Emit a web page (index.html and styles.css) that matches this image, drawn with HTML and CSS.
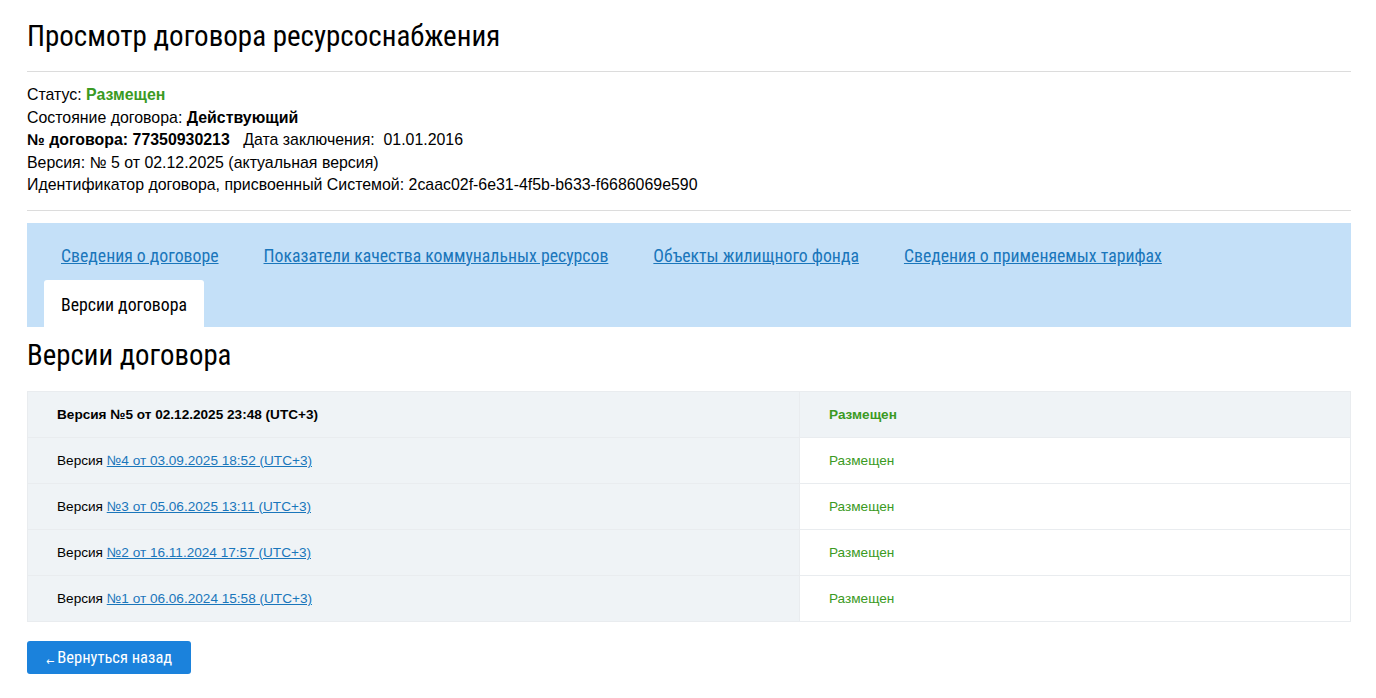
FILE: index.html
```html
<!DOCTYPE html>
<html lang="ru">
  <head>
    <meta charset="UTF-8" />
    <meta name="viewport" content="width=device-width, initial-scale=1.0" />
    <title>Просмотр договора ресурсоснабжения</title>
    <link rel="stylesheet" href="styles.css">
  </head>
  <body>
    <div class="page">
      <h1 class="page-title">Просмотр договора ресурсоснабжения</h1>

      <div class="info">
        <div>Статус: <span class="status-ok">Размещен</span></div>
        <div>Состояние договора: <b>Действующий</b></div>
        <div>
          <b>№ договора: 77350930213</b>
          <span class="gap">Дата заключения:&nbsp; 01.01.2016</span>
        </div>
        <div>Версия: № 5 от 02.12.2025 (актуальная версия)</div>
        <div>Идентификатор договора, присвоенный Системой: 2caac02f-6e31-4f5b-b633-f6686069e590</div>
      </div>

      <div class="tabs">
        <div class="tabs-row links">
          <a href="#" class="tab-link">Сведения о договоре</a>
          <a href="#" class="tab-link">Показатели качества коммунальных ресурсов</a>
          <a href="#" class="tab-link">Объекты жилищного фонда</a>
          <a href="#" class="tab-link">Сведения о применяемых тарифах</a>
        </div>
        <div class="tabs-row">
          <span class="tab-active">Версии договора</span>
        </div>
      </div>

      <h2 class="section-title">Версии договора</h2>

      <table class="versions">
        <tr class="current">
          <td class="col-name"><b>Версия №5 от 02.12.2025 23:48 (UTC+3)</b></td>
          <td class="col-status"><b>Размещен</b></td>
        </tr>
        <tr>
          <td class="col-name">Версия <a href="#">№4 от 03.09.2025 18:52 (UTC+3)</a></td>
          <td class="col-status">Размещен</td>
        </tr>
        <tr>
          <td class="col-name">Версия <a href="#">№3 от 05.06.2025 13:11 (UTC+3)</a></td>
          <td class="col-status">Размещен</td>
        </tr>
        <tr>
          <td class="col-name">Версия <a href="#">№2 от 16.11.2024 17:57 (UTC+3)</a></td>
          <td class="col-status">Размещен</td>
        </tr>
        <tr>
          <td class="col-name">Версия <a href="#">№1 от 06.06.2024 15:58 (UTC+3)</a></td>
          <td class="col-status">Размещен</td>
        </tr>
      </table>

      <button class="back-btn" type="button"><span class="arrow">&larr;</span>Вернуться назад</button>
    </div>
  </body>
</html>
```

FILE: styles.css
```css
* {
  margin: 0;
  padding: 0;
  box-sizing: border-box;
}

body {
  font-family: "Liberation Sans", Arial, sans-serif;
  color: #000;
  background: #fff;
}

.page {
  width: 1324px;
  margin-left: 27px;
  padding-top: 18px;
}

.page-title,
.tab-link,
.tab-active,
.section-title,
.back-btn {
  font-family: Roboto, "DejaVu Sans Condensed", sans-serif;
  font-stretch: 75%;
}

.page-title {
  font-weight: normal;
  font-size: 29px;
  line-height: 36px;
  padding-bottom: 17px;
  border-bottom: 1px solid #dcdcdc;
}

.info {
  font-size: 15.9px;
  line-height: 22.5px;
  padding: 12px 0 13px;
  border-bottom: 1px solid #dcdcdc;
}

.status-ok {
  color: #3b9a23;
  font-weight: bold;
}

.gap {
  margin-left: 9px;
}

/* tabs */

.tabs {
  margin-top: 12px;
  background: #c4e0f8;
  padding: 0 17px;
}

.tabs-row {
  display: flex;
  gap: 45px;
}

.tabs-row.links {
  padding-left: 17px;
}

.tab-link {
  font-size: 17.75px;
  line-height: 22px;
  color: #1a76bb;
  text-decoration: underline;
  padding: 22px 0 13px;
}

.tab-active {
  font-size: 17.75px;
  line-height: 22px;
  background: #fff;
  border-radius: 3px 3px 0 0;
  padding: 14px 17px 11px;
}

.section-title {
  font-weight: normal;
  font-size: 28.8px;
  line-height: 34px;
  padding: 11px 0 19px;
}

/* versions table */

.versions {
  width: 100%;
  border-collapse: collapse;
  font-size: 13.6px;
  border: 1px solid #e6e6e6;
}

.versions td {
  height: 46px;
  border: 1px solid #e9ecef;
  padding: 0 29px;
}

.versions .col-name {
  width: 772px;
  background: #eff3f6;
}

.versions .col-status {
  color: #3b9a23;
}

.versions .current td {
  background: #eff3f6;
}

.versions a {
  color: #1a76bb;
}

.back-btn {
  margin-top: 19px;
  height: 33px;
  padding: 0 19px;
  background: #1b82dc;
  color: #fff;
  border: none;
  border-radius: 3px;
  font-size: 16.5px;
  cursor: pointer;
}

.back-btn .arrow {
  font-family: "DejaVu Sans", sans-serif;
  font-size: 11px;
  margin-right: 3px;
  position: relative;
  top: 2px;
}
```
